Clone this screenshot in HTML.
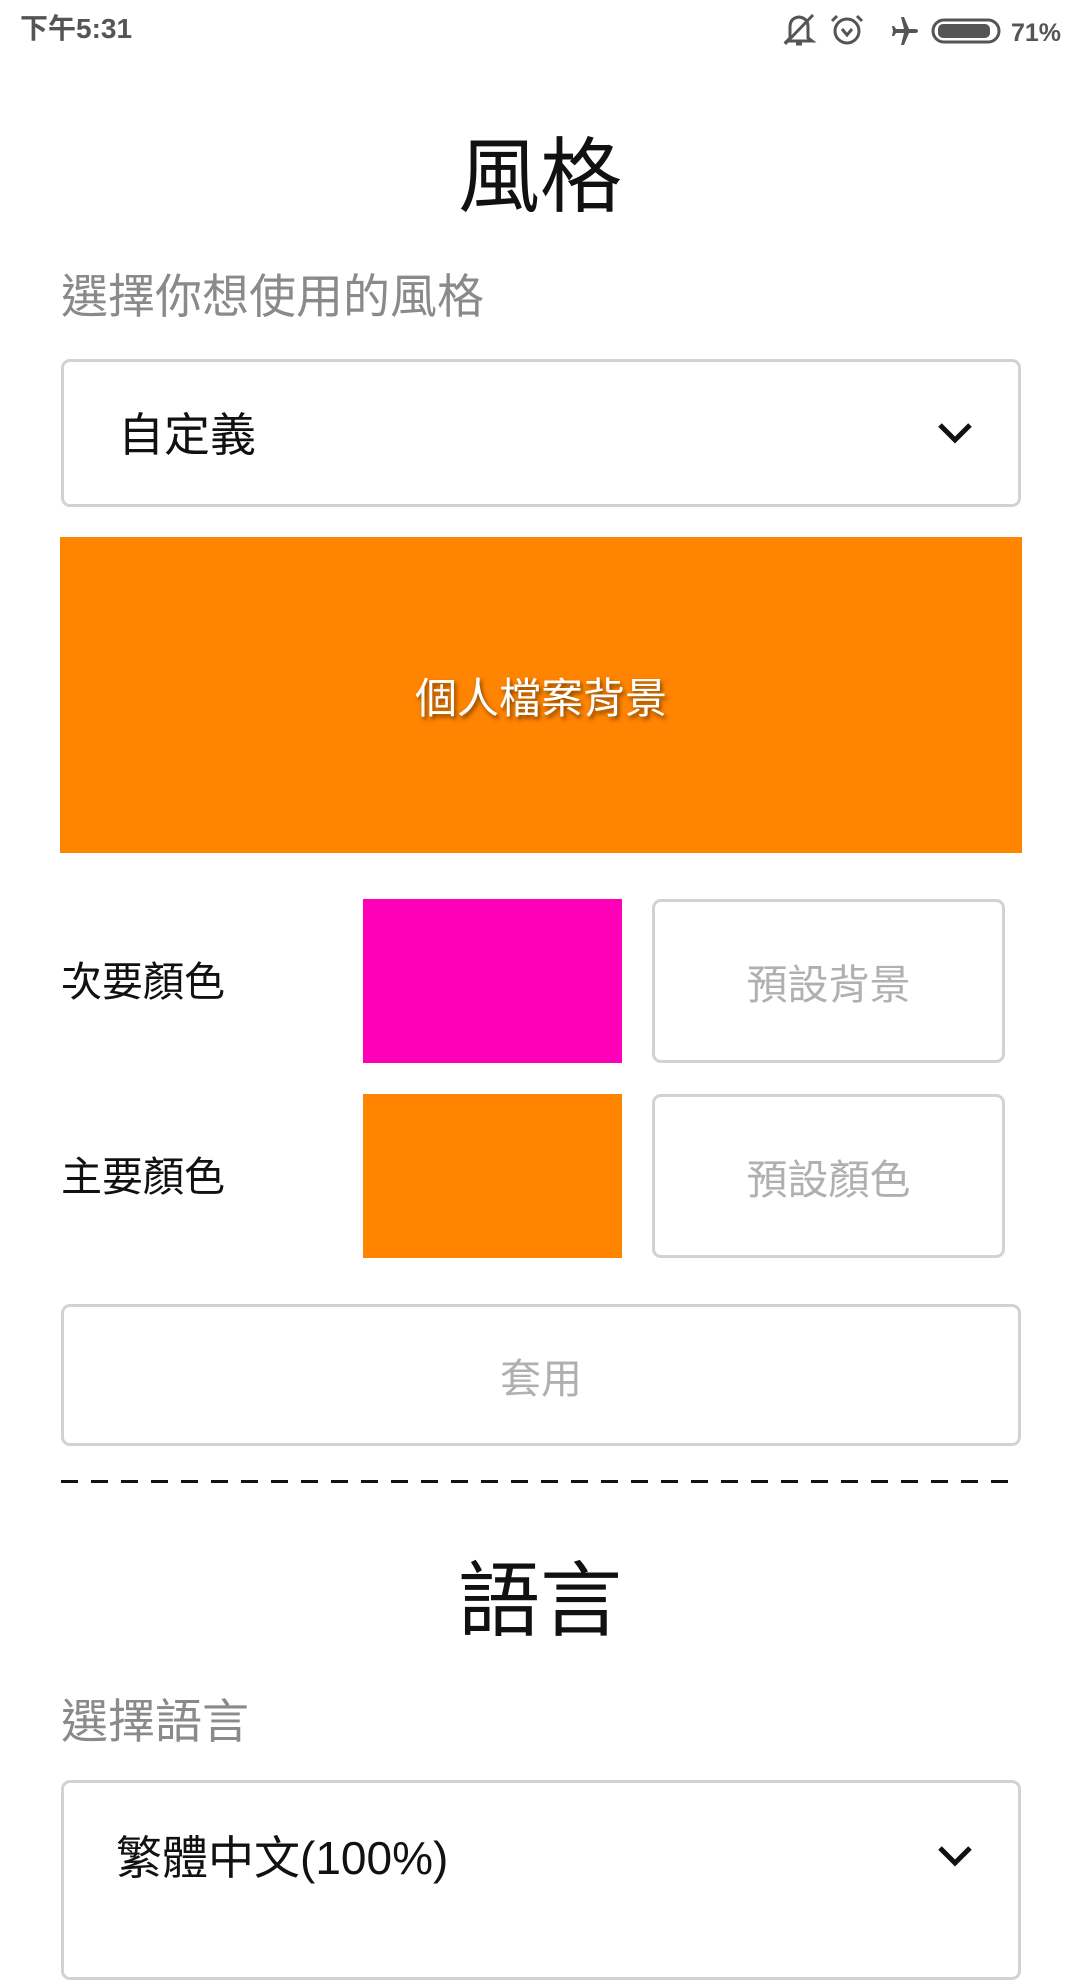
<!DOCTYPE html>
<html><head><meta charset="utf-8"><style>
*{margin:0;padding:0;box-sizing:border-box}
body{width:1080px;height:1920px;overflow:hidden;background:#fff;position:relative;font-family:"Liberation Sans","Noto Sans CJK TC",sans-serif}
.a{position:absolute}
.box{position:absolute;border:3px solid #d2d2d2;border-radius:9px}
.t{position:absolute;white-space:nowrap;line-height:1}
.cen{display:flex;align-items:center;justify-content:center;color:#b0b0b0;font-size:41px}
</style></head><body>
<div class="t" style="left:20px;top:15px;font-size:28px;font-weight:bold;color:#555">下午5:31</div>
<svg class="a" style="left:780px;top:10px" width="300" height="40" viewBox="0 0 300 40">
<g fill="none" stroke="#555" stroke-width="3">
<path d="M10 28 L10 17 Q10 8 19 7 Q28 8 28 17 L28 28 L32 31 L7 31 Z"/><path d="M5 34 L33 5"/><path d="M16 34 h6"/>
<circle cx="67" cy="21" r="12"/><path d="M57 6 l-5 5 M77 6 l5 5 M62 19 l5 6 l5 -6"/>
</g>
<path d="M135 19 h-6 l-5 -12 h-3 l3 12 h-8 l-2 -3 h-2 l1 5 l-1 5 h2 l2 -3 h8 l-3 12 h3 l5 -12 h6 q3 0 3 -2 q0 -2 -3 -2z" fill="#555"/>
<rect x="153" y="10" width="66" height="22" rx="11" fill="none" stroke="#555" stroke-width="3"/>
<rect x="158" y="14" width="52" height="14" rx="5" fill="#555"/>
<text x="231" y="31" font-size="25" font-weight="bold" fill="#555" font-family="Liberation Sans">71%</text>
</svg>
<div class="t" style="left:0;width:1080px;text-align:center;top:137px;font-size:82px;color:#111">風格</div>
<div class="t" style="left:61px;top:273px;font-size:47px;color:#8a8a8a">選擇你想使用的風格</div>
<div class="box" style="left:61px;top:359px;width:960px;height:148px"></div>
<div class="t" style="left:118px;top:412px;font-size:46px;color:#111">自定義</div>
<svg class="a" style="left:937px;top:420px" width="36" height="26"><path d="M3 5 L18 20 L33 5" fill="none" stroke="#111" stroke-width="5"/></svg>
<div class="a cen" style="left:60px;top:537px;width:962px;height:316px;background:#ff8400;color:#fff;font-size:42px;text-shadow:2px 3px 4px rgba(0,0,0,.5)">個人檔案背景</div>
<div class="t" style="left:61px;top:962px;font-size:41px;color:#111">次要顏色</div>
<div class="a" style="left:363px;top:899px;width:259px;height:164px;background:#ff00b8"></div>
<div class="box cen" style="left:652px;top:899px;width:353px;height:164px">預設背景</div>
<div class="t" style="left:61px;top:1157px;font-size:41px;color:#111">主要顏色</div>
<div class="a" style="left:363px;top:1094px;width:259px;height:164px;background:#ff8400"></div>
<div class="box cen" style="left:652px;top:1094px;width:353px;height:164px">預設顏色</div>
<div class="box cen" style="left:61px;top:1304px;width:960px;height:142px">套用</div>
<div class="a" style="left:61px;top:1480px;width:950px;height:3px;background:repeating-linear-gradient(90deg,#111 0 17px,transparent 17px 30px)"></div>
<div class="t" style="left:0;width:1080px;text-align:center;top:1561px;font-size:82px;color:#111">語言</div>
<div class="t" style="left:61px;top:1698px;font-size:47px;color:#8a8a8a">選擇語言</div>
<div class="box" style="left:61px;top:1780px;width:960px;height:200px"></div>
<div class="t" style="left:116px;top:1835px;font-size:46px;color:#111">繁體中文(100%)</div>
<svg class="a" style="left:937px;top:1843px" width="36" height="26"><path d="M3 5 L18 20 L33 5" fill="none" stroke="#111" stroke-width="5"/></svg>
</body></html>
